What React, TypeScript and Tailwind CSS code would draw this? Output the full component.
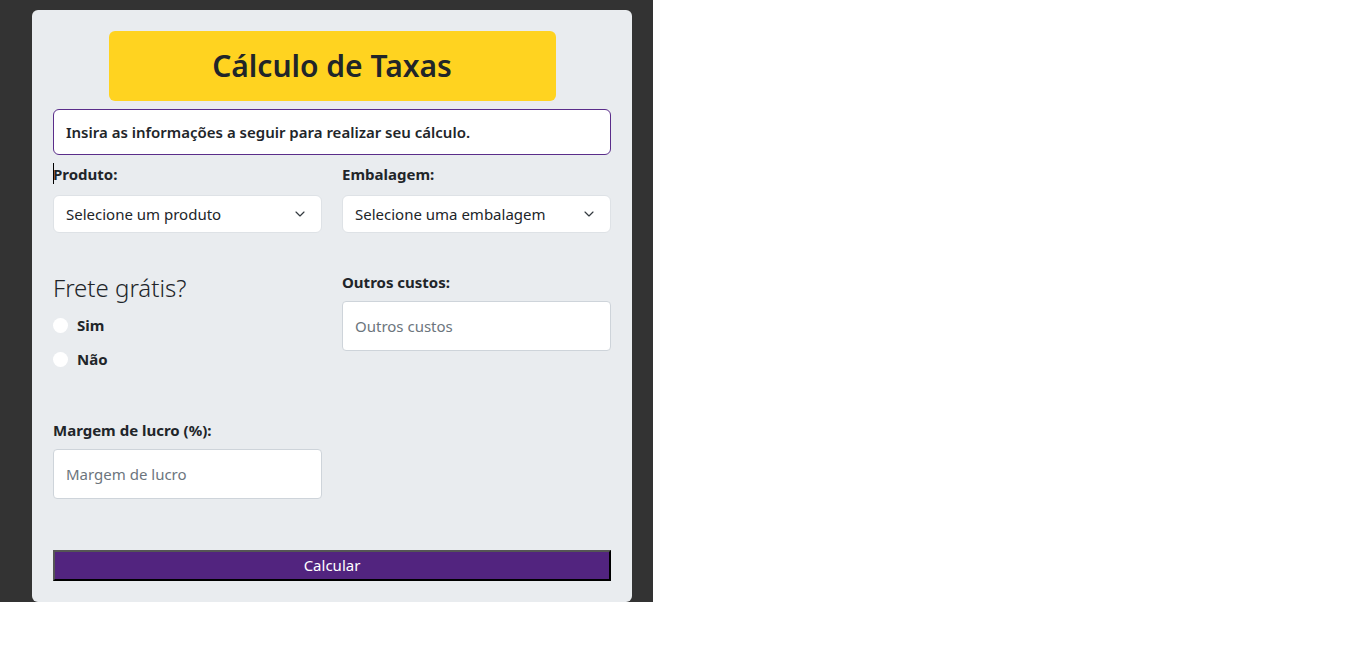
import { ChevronDown } from 'lucide-react';

const font = { fontFamily: '"Segoe UI", "Noto Sans", sans-serif' };

export default function App() {
  return (
    <div className="min-h-[671px] bg-white text-[#212529]" style={font}>
      <div className="w-[653px] bg-[#333333] pt-[10px] pl-[32px]">
        <div className="w-[600px] h-[592px] bg-[#e9ecef] rounded-[6px] px-[21px] pt-[21px] flex flex-col">
          <div className="mx-auto w-[447px] h-[70px] rounded-[6px] bg-[#ffd320] flex items-center justify-center">
            <h1 className="text-[30px] font-semibold leading-none">Cálculo de Taxas</h1>
          </div>

          <div className="mt-[8px] h-[46px] bg-white border border-[#5a2d8a] rounded-[6px] flex items-center px-[12px]">
            <p className="text-[15px] font-semibold">Insira as informações a seguir para realizar seu cálculo.</p>
          </div>

          <div className="grid grid-cols-2 gap-x-[20px] mt-[8px]">
            {/* Produto */}
            <div className="flex flex-col">
              <label className="relative text-[15px] font-bold leading-[22px] h-[22px]">
                <span className="absolute left-0 top-0 w-[1px] h-[21px] bg-black" />
                Produto:
              </label>
              <div className="mt-[10px] h-[38px] bg-white border border-[#dee2e6] rounded-[6px] flex items-center justify-between pl-[12px] pr-[13px]">
                <span className="text-[15px]">Selecione um produto</span>
                <ChevronDown className="w-[16px] h-[16px] text-[#343a40]" strokeWidth={1.75} />
              </div>
            </div>

            {/* Embalagem */}
            <div className="flex flex-col">
              <label className="text-[15px] font-bold leading-[22px] h-[22px]">Embalagem:</label>
              <div className="mt-[10px] h-[38px] bg-white border border-[#dee2e6] rounded-[6px] flex items-center justify-between pl-[12px] pr-[13px]">
                <span className="text-[15px]">Selecione uma embalagem</span>
                <ChevronDown className="w-[16px] h-[16px] text-[#343a40]" strokeWidth={1.75} />
              </div>
            </div>

            {/* Frete */}
            <div className="flex flex-col mt-[38px]">
              <h2 className="text-[24px] font-light leading-[34px]">Frete grátis?</h2>
              <div className="mt-[9px] flex items-center gap-[9px] h-[22px]">
                <span className="w-[15px] h-[15px] rounded-full bg-white" />
                <span className="text-[15px] font-bold">Sim</span>
              </div>
              <div className="mt-[12px] flex items-center gap-[9px] h-[22px]">
                <span className="w-[15px] h-[15px] rounded-full bg-white" />
                <span className="text-[15px] font-bold">Não</span>
              </div>
            </div>

            {/* Outros custos */}
            <div className="flex flex-col mt-[38px]">
              <label className="text-[15px] font-bold leading-[22px] h-[22px]">Outros custos:</label>
              <div className="mt-[8px] h-[50px] bg-white border border-[#ced4da] rounded-[4px] flex items-center px-[12px]">
                <span className="text-[15px] text-[#6c757d]">Outros custos</span>
              </div>
            </div>

            {/* Margem */}
            <div className="flex flex-col mt-[49px]">
              <label className="text-[15px] font-bold leading-[22px] h-[22px]">Margem de lucro (%):</label>
              <div className="mt-[8px] h-[50px] bg-white border border-[#ced4da] rounded-[4px] flex items-center px-[12px]">
                <span className="text-[15px] text-[#6c757d]">Margem de lucro</span>
              </div>
            </div>
          </div>

          <button className="mt-[51px] h-[31px] w-full bg-[#52247f] text-white text-[15px] border-2 border-t-[#555] border-l-[#555] border-r-black border-b-black">
            Calcular
          </button>
        </div>
      </div>
    </div>
  );
}
